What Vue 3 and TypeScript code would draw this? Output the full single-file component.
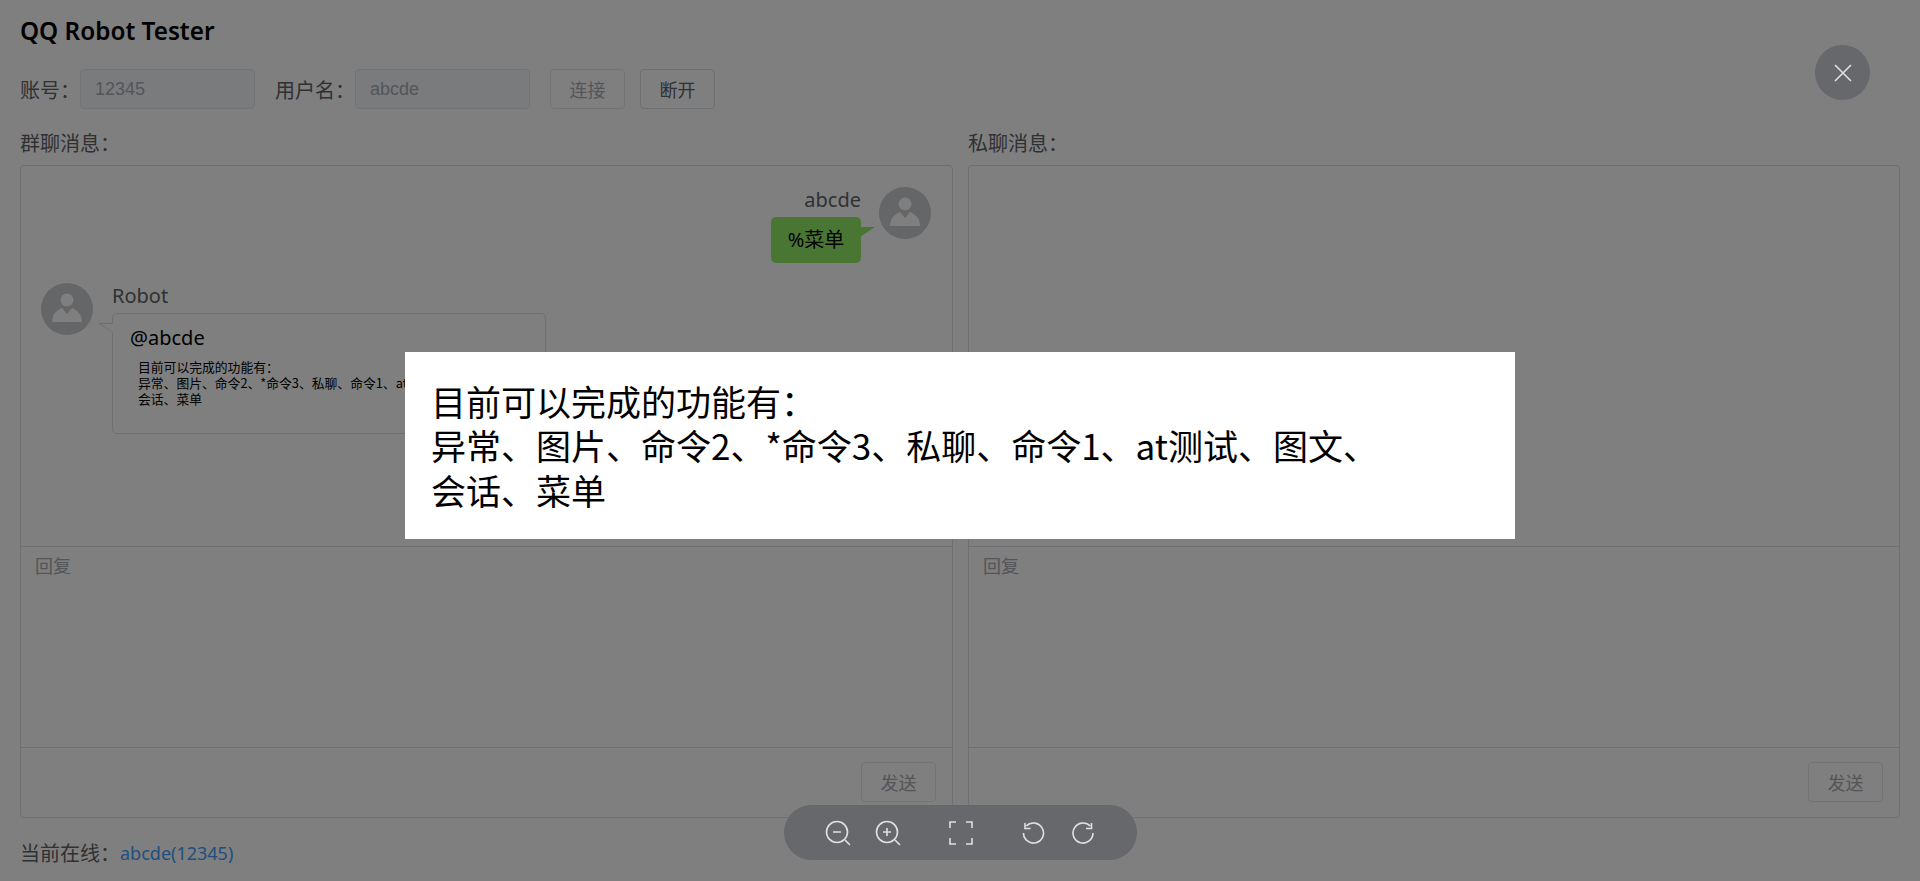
<template>
  <div class="page">
    <h2 class="title">QQ Robot Tester</h2>

    <div class="login">
      <label class="field">
        <span>账号：</span>
        <input class="text-input" type="text" value="12345" disabled />
      </label>
      <label class="field">
        <span>用户名：</span>
        <input class="text-input" type="text" value="abcde" disabled />
      </label>
      <div class="login-buttons">
        <button class="btn" disabled>连接</button>
        <button class="btn">断开</button>
      </div>
    </div>

    <div class="panels">
      <section v-for="panel in panels" :key="panel.title" class="panel">
        <div class="panel-label">{{ panel.title }}：</div>
        <div class="box">
          <div class="messages">
            <template v-if="panel.group">
              <div class="msg mine">
                <div class="msg-body">
                  <div class="name">abcde</div>
                  <div class="bubble green">%菜单</div>
                </div>
                <svg class="avatar" viewBox="0 0 52 52">
                  <circle cx="26" cy="26" r="26" fill="#c9ccd1" />
                  <circle cx="26" cy="17" r="6.5" fill="#fff" />
                  <path d="M11 39C11 30 17 27 21 25L26 31L31 25C35 27 41 30 41 39Z" fill="#fff" />
                </svg>
              </div>
              <div class="msg">
                <svg class="avatar" viewBox="0 0 52 52">
                  <circle cx="26" cy="26" r="26" fill="#c9ccd1" />
                  <circle cx="26" cy="17" r="6.5" fill="#fff" />
                  <path d="M11 39C11 30 17 27 21 25L26 31L31 25C35 27 41 30 41 39Z" fill="#fff" />
                </svg>
                <div class="msg-body">
                  <div class="name">Robot</div>
                  <div class="bubble white">
                    <div class="at">@abcde</div>
                    <div class="pic small">
                      <template v-for="line in features" :key="line">{{ line }}<br /></template>
                    </div>
                  </div>
                </div>
              </div>
            </template>
          </div>
          <div class="reply">回复</div>
          <div class="send">
            <button class="btn" disabled>发送</button>
          </div>
        </div>
      </section>
    </div>

    <div class="online">
      <span>当前在线：</span>
      <a class="user">abcde(12345)</a>
    </div>

    <!-- 图片预览 -->
    <div class="viewer">
      <div class="pic large">
        <template v-for="line in features" :key="line">{{ line }}<br /></template>
      </div>
      <div class="viewer-close">
        <svg width="18" height="18" viewBox="0 0 18 18">
          <path d="M1 1L17 17M17 1L1 17" stroke="#e0e0e1" stroke-width="1.6" fill="none" />
        </svg>
      </div>
      <div class="toolbar">
        <svg class="tool" viewBox="0 0 26 26">
          <circle cx="12" cy="12" r="10.5" />
          <path d="M20 20L25 25M8 12H16" />
        </svg>
        <svg class="tool" viewBox="0 0 26 26">
          <circle cx="12" cy="12" r="10.5" />
          <path d="M20 20L25 25M8 12H16M12 8V16" />
        </svg>
        <svg class="tool fit" viewBox="0 0 26 26">
          <path d="M8 2H2V8M18 2H24V8M8 24H2V18M18 24H24V18" />
        </svg>
        <svg class="tool" viewBox="0 0 26 26">
          <path d="M5.4 6A10 10 0 1 1 2.500 13M4 3V8.500H9.500" />
        </svg>
        <svg class="tool" viewBox="0 0 26 26">
          <path d="M19.100 6A10 10 0 1 0 22 13M20.500 3V8.500H15" />
        </svg>
      </div>
    </div>
  </div>
</template>

<script setup lang="ts">
interface Panel {
  title: string
  group: boolean
}

const panels: Panel[] = [
  { title: '群聊消息', group: true },
  { title: '私聊消息', group: false },
]

// 机器人返回的图片内容
const features: string[] = [
  '目前可以完成的功能有：',
  '异常、图片、命令2、*命令3、私聊、命令1、at测试、图文、',
  '会话、菜单',
]
</script>

<style>
body {
  margin: 0;
  background: #fff;
}
</style>

<style scoped>
.page {
  height: 881px;
  box-sizing: border-box;
  padding: 14px 20px 0;
  font-family: "Noto Sans", "Noto Sans CJK SC", sans-serif;
  font-size: 20px;
  color: #606266;
  overflow: hidden;
}

.title {
  margin: 0;
  height: 33px;
  line-height: 33px;
  font-size: 24.3px;
  font-weight: 600;
  color: #000;
}

.login {
  display: flex;
  align-items: center;
  margin-top: 22px;
  height: 40px;
}

.field {
  display: flex;
  align-items: center;
  margin-right: 20px;
}

.text-input {
  width: 175px;
  height: 40px;
  box-sizing: border-box;
  padding: 0 14px;
  border: 1px solid #e4e7ed;
  border-radius: 4px;
  background: #f5f7fa;
  color: #a8abb2;
  font-family: "Liberation Sans", sans-serif;
  font-size: 18px;
}

.login-buttons {
  display: flex;
  gap: 15px;
}

.btn {
  width: 75px;
  height: 40px;
  padding: 0;
  border: 1px solid #dcdfe6;
  border-radius: 4px;
  background: #fff;
  color: #606266;
  font-family: inherit;
  font-size: 18px;
}

.btn:disabled {
  border-color: #e4e7ed;
  color: #a8abb2;
}

.panels {
  display: grid;
  grid-template-columns: 933px 932px;
  gap: 15px;
  margin-top: 22px;
}

.panel-label {
  height: 25px;
  line-height: 25px;
  margin-bottom: 9px;
}

.box {
  display: flex;
  flex-direction: column;
  height: 653px;
  box-sizing: border-box;
  border: 1px solid #dcdfe6;
  border-radius: 4px;
}

.messages {
  flex: none;
  height: 381px;
  box-sizing: border-box;
  padding: 21px 21px 0 20px;
  border-bottom: 1px solid #dcdfe6;
}

.msg {
  display: flex;
  gap: 19px;
  margin-bottom: 20px;
}

.msg.mine {
  gap: 18px;
  justify-content: flex-end;
}

.msg.mine .msg-body {
  display: flex;
  flex-direction: column;
  align-items: flex-end;
}

.avatar {
  flex: none;
  width: 52px;
  height: 52px;
}

.name {
  height: 25px;
  line-height: 25px;
  margin-bottom: 5px;
}

.bubble {
  position: relative;
  box-sizing: border-box;
  border-radius: 5px;
}

.bubble::before,
.white::after {
  content: "";
  position: absolute;
  top: 10px;
  width: 15px;
  height: 10px;
}

.green {
  width: 90px;
  height: 46px;
  line-height: 46px;
  text-align: center;
  background: #95ec69;
  color: #000;
}

.green::before {
  right: -14px;
  background: #95ec69;
  clip-path: polygon(0 0, 100% 0, 0 100%);
}

.white {
  width: 434px;
  height: 121px;
  padding: 10px 17px;
  border: 1px solid #dcdfe6;
  background: #fff;
}

.white::before {
  left: -15px;
  top: 9px;
  background: #dcdfe6;
  clip-path: polygon(0 0, 100% 0, 100% 100%);
}

.white::after {
  left: -12px;
  top: 10px;
  width: 13px;
  height: 9px;
  background: #fff;
  clip-path: polygon(0 0, 100% 0, 100% 100%);
}

.at {
  height: 25px;
  line-height: 28px;
  font-size: 20px;
  color: #000;
}

.pic {
  background: #fff;
  color: #000;
  white-space: nowrap;
  font-family: "Noto Sans CJK SC", sans-serif;
}

.small {
  width: 405px;
  box-sizing: border-box;
  padding: 9.5px 8px;
  font-size: 12.8px;
  line-height: 16.4px;
}

.large {
  width: 1110px;
  height: 187px;
  box-sizing: border-box;
  padding: 27px 26px;
  font-size: 35px;
  line-height: 44.3px;
}

.reply {
  flex: none;
  height: 201px;
  box-sizing: border-box;
  padding: 7px 14px;
  font-size: 18px;
  line-height: 25px;
  color: #a8abb2;
  border-bottom: 1px solid #dcdfe6;
}

.send {
  display: flex;
  justify-content: flex-end;
  padding: 14px 16px 0 0;
}

.online {
  display: flex;
  margin-top: 23px;
  line-height: 25px;
}

.user {
  font-size: 18px;
  color: #409eff;
}

.viewer {
  position: fixed;
  inset: 0;
  display: flex;
  align-items: center;
  justify-content: center;
  padding-top: 10px;
  background: rgba(0, 0, 0, 0.5);
}

.viewer-close {
  position: absolute;
  top: 45px;
  right: 50px;
  display: flex;
  align-items: center;
  justify-content: center;
  width: 55px;
  height: 55px;
  border-radius: 50%;
  background: #66686b;
}

.toolbar {
  position: absolute;
  left: 784px;
  bottom: 21px;
  display: flex;
  align-items: center;
  justify-content: center;
  gap: 24px;
  width: 353px;
  height: 55px;
  border-radius: 28px;
  background: #66686b;
}

.tool {
  width: 26px;
  height: 26px;
  fill: none;
  stroke: #e0e0e1;
  stroke-width: 1.6;
}

.fit {
  margin: 0 23px;
}
</style>
